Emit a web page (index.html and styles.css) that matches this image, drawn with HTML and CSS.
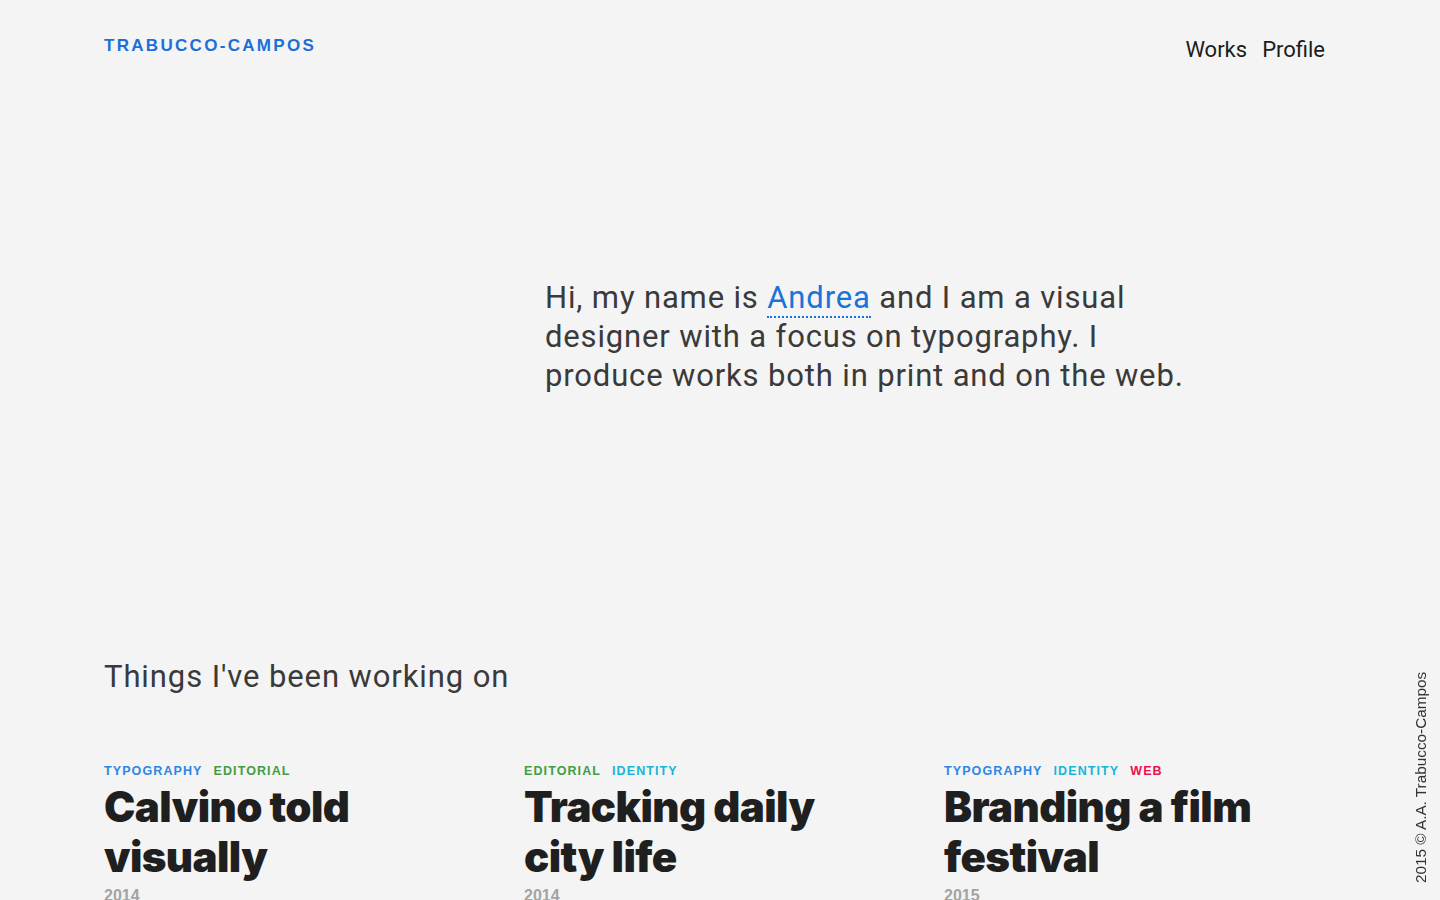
FILE: index.html
```html
<!DOCTYPE html>
<html lang="en">
<head>
<meta charset="utf-8">
<title>Trabucco-Campos</title>
<link rel="stylesheet" href="styles.css">
</head>
<body>
<div class="page">
  <header class="header">
    <a class="logo" href="#">TRABUCCO-CAMPOS</a>
    <nav class="nav">
      <a href="#">Works</a>
      <a href="#">Profile</a>
    </nav>
  </header>

  <section class="intro">
    <p>Hi, my name is <a class="name" href="#">Andrea</a> and I am a visual designer with a focus on typography. I produce works both in print and on the web.</p>
  </section>

  <section class="works">
    <h2 class="works-title">Things I've been working on</h2>
    <div class="grid">
      <article class="card">
        <div class="tags"><span class="tag t-typo">Typography</span><span class="tag t-edit">Editorial</span></div>
        <h3 class="card-title">Calvino told visually</h3>
        <div class="year">2014</div>
      </article>
      <article class="card">
        <div class="tags"><span class="tag t-edit">Editorial</span><span class="tag t-ident">Identity</span></div>
        <h3 class="card-title">Tracking daily city life</h3>
        <div class="year">2014</div>
      </article>
      <article class="card">
        <div class="tags"><span class="tag t-typo">Typography</span><span class="tag t-ident">Identity</span><span class="tag t-web">Web</span></div>
        <h3 class="card-title">Branding a film festival</h3>
        <div class="year">2015</div>
      </article>
    </div>
  </section>

  <div class="side-note">2015 © A.A. Trabucco-Campos</div>
</div>
</body>
</html>
```
FILE: styles.css
```css
html, body {
  margin: 0;
  padding: 0;
  background: #f4f4f4;
}
body {
  font-family: Roboto, "Noto Sans", Arial, sans-serif;
  color: #3a3a3a;
  overflow: hidden;
}
a { text-decoration: none; }

.page {
  padding: 0 104px;
  min-height: 900px;
}

.header {
  display: flex;
  justify-content: space-between;
  align-items: flex-start;
  padding-top: 36px;
}
.logo {
  font-family: "Liberation Sans", Arial, sans-serif;
  font-weight: 700;
  font-size: 17px;
  letter-spacing: 2.3px;
  color: #1a6fd8;
  line-height: 20px;
}
.nav {
  display: flex;
  gap: 15px;
  margin-right: 11px;
  padding-top: 2px;
}
.nav a {
  color: #1c1c1c;
  font-size: 22px;
  line-height: 24px;
}

.intro {
  margin-left: 441px;
  margin-top: 216px;
  width: 660px;
}
.intro p {
  margin: 0;
  font-size: 31px;
  line-height: 39px;
  letter-spacing: 0.85px;
  color: #3a3a3a;
}
.name {
  color: #1a73d9;
  border-bottom: 2px dotted #1a73d9;
}

.works {
  margin-top: 262px;
}
.works-title {
  margin: 0;
  font-weight: 400;
  font-size: 31px;
  line-height: 40px;
  letter-spacing: 0.9px;
  color: #3a3a3a;
}
.grid {
  display: grid;
  grid-template-columns: repeat(3, 1fr);
  column-gap: 28px;
  margin-top: 66px;
}
.tags {
  display: flex;
  gap: 11px;
}
.tag {
  font-family: "Liberation Sans", Arial, sans-serif;
  font-weight: 700;
  font-size: 12.5px;
  letter-spacing: 1.1px;
  text-transform: uppercase;
  line-height: 16px;
}
.t-typo { color: #2a87e6; }
.t-edit { color: #3f9e45; }
.t-ident { color: #19b5d4; }
.t-web { color: #ef0f4f; }

.card-title {
  margin: 3px 0 0;
  font-family: Inter, Roboto, "Liberation Sans", sans-serif;
  font-weight: 900;
  font-size: 42px;
  line-height: 50px;
  letter-spacing: -0.6px;
  color: #1f1f1f;
  max-width: 330px;
}
.year {
  font-family: "Liberation Sans", Arial, sans-serif;
  font-weight: 700;
  font-size: 16px;
  line-height: 18px;
  color: #a3a3a3;
  margin-top: 5px;
}

.side-note {
  position: fixed;
  left: 1412px;
  top: 883px;
  transform: rotate(-90deg);
  transform-origin: 0 0;
  white-space: nowrap;
  font-family: "Liberation Sans", Arial, sans-serif;
  font-size: 15.3px;
  line-height: 18px;
  color: #333;
}
```
